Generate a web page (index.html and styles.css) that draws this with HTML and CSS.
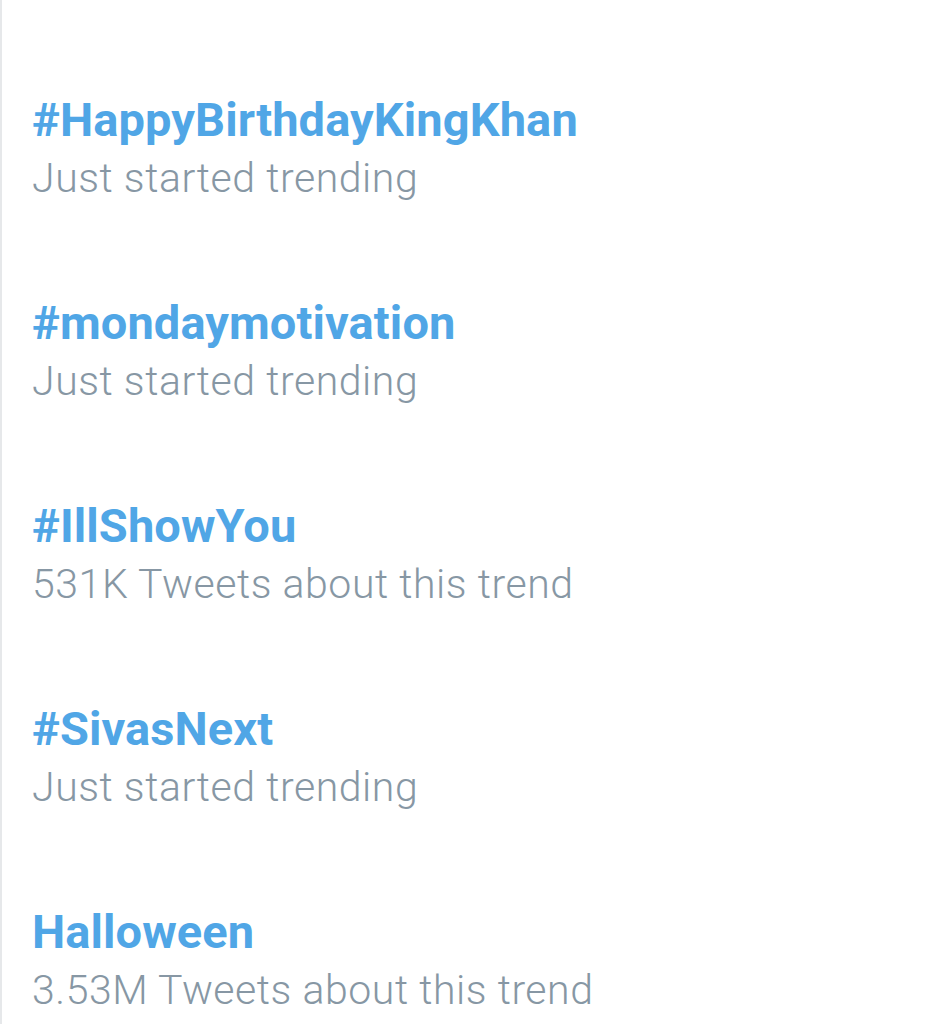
FILE: index.html
```html
<!DOCTYPE html>
<html>
<head>
<meta charset="utf-8">
<link rel="stylesheet" href="styles.css">
</head>
<body>
<div class="panel">
  <ul class="trends">
    <li class="trend">
      <div class="trend-name">#HappyBirthdayKingKhan</div>
      <div class="trend-meta">Just started trending</div>
    </li>
    <li class="trend">
      <div class="trend-name">#mondaymotivation</div>
      <div class="trend-meta">Just started trending</div>
    </li>
    <li class="trend">
      <div class="trend-name">#IllShowYou</div>
      <div class="trend-meta">531K Tweets about this trend</div>
    </li>
    <li class="trend">
      <div class="trend-name">#SivasNext</div>
      <div class="trend-meta">Just started trending</div>
    </li>
    <li class="trend">
      <div class="trend-name">Halloween</div>
      <div class="trend-meta">3.53M Tweets about this trend</div>
    </li>
  </ul>
</div>
</body>
</html>
```
FILE: styles.css
```css
html, body {
  margin: 0;
  padding: 0;
  background: #ffffff;
  height: 100%;
}
body {
  font-family: Roboto, "Noto Sans", sans-serif;
  overflow: hidden;
}
.panel {
  min-height: 100%;
  border-left: 2px solid #e6e8ea;
  box-sizing: border-box;
  padding-left: 30px;
}
.trends {
  list-style: none;
  margin: 0;
  padding: 0;
  padding-top: 92px;
  display: flex;
  flex-direction: column;
  gap: 87px;
}
.trend {
  display: flex;
  flex-direction: column;
}
.trend-name {
  font-size: 47px;
  font-weight: 700;
  color: #50a6e6;
  line-height: 56px;
  letter-spacing: 0.1px;
}
.trend-meta {
  font-size: 41px;
  font-weight: 300;
  color: #8797a4;
  line-height: 60px;
  letter-spacing: 0.55px;
}
```
